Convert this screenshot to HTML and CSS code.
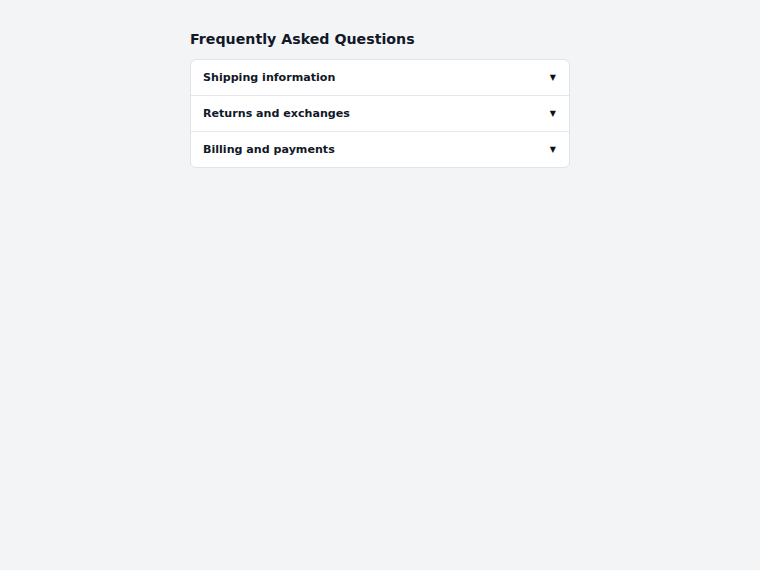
FILE: index.html
```html
<!DOCTYPE html>
<html>
<head>
<meta charset="utf-8">
<link rel="stylesheet" href="styles.css">
</head>
<body>
<div class="faq">
  <h2 class="faq-title">Frequently Asked Questions</h2>
  <div class="faq-list">
    <div class="faq-item"><span class="faq-q">Shipping information</span><span class="faq-arrow">▼</span></div>
    <div class="faq-item"><span class="faq-q">Returns and exchanges</span><span class="faq-arrow">▼</span></div>
    <div class="faq-item"><span class="faq-q">Billing and payments</span><span class="faq-arrow">▼</span></div>
  </div>
</div>
</body>
</html>
```
FILE: styles.css
```css
html, body {
  margin: 0;
  padding: 0;
  background: #f3f4f6;
  font-family: "DejaVu Sans", sans-serif;
  color: #111;
}
.faq {
  width: 380px;
  margin: 0 auto;
  padding-top: 28px;
}
.faq-title {
  font-size: 14.2px;
  font-weight: bold;
  line-height: 22px;
  margin: 0 0 9px 0;
  color: #111827;
}
.faq-list {
  background: #fff;
  border: 1px solid #e1e3e7;
  border-radius: 6px;
}
.faq-item {
  display: flex;
  align-items: center;
  justify-content: space-between;
  height: 35px;
  padding: 0 12px;
  border-bottom: 1px solid #e5e7eb;
}
.faq-item:last-child {
  border-bottom: none;
}
.faq-q {
  font-size: 11.1px;
  font-weight: bold;
  color: #111827;
}
.faq-arrow {
  font-size: 8px;
  color: #111;
  padding-right: 1px;
}
```
